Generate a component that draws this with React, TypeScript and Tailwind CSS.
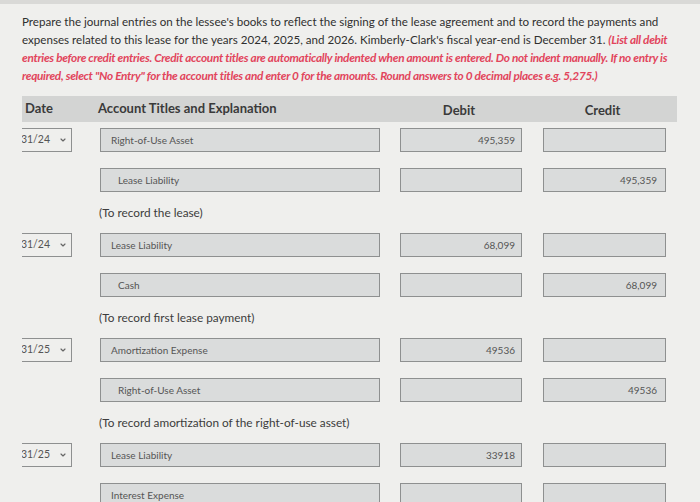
import { ChevronDown } from 'lucide-react';

interface Line {
  account: string;
  indent?: boolean;
  debit?: string;
  credit?: string;
}

interface Entry {
  date: string;
  lines: Line[];
  note?: string;
}

const ENTRIES: Entry[] = [
  {
    date: '12/31/24',
    lines: [
      { account: 'Right-of-Use Asset', debit: '495,359' },
      { account: 'Lease Liability', indent: true, credit: '495,359' },
    ],
    note: '(To record the lease)',
  },
  {
    date: '12/31/24',
    lines: [
      { account: 'Lease Liability', debit: '68,099' },
      { account: 'Cash', indent: true, credit: '68,099' },
    ],
    note: '(To record first lease payment)',
  },
  {
    date: '12/31/25',
    lines: [
      { account: 'Amortization Expense', debit: '49536' },
      { account: 'Right-of-Use Asset', indent: true, credit: '49536' },
    ],
    note: '(To record amortization of the right-of-use asset)',
  },
  {
    date: '12/31/25',
    lines: [
      { account: 'Lease Liability', debit: '33918' },
      { account: 'Interest Expense' },
    ],
  },
];

const box = 'h-[24px] bg-[#dadcdc] border border-[#8e9090] flex items-center text-[10px] text-[#555] whitespace-nowrap overflow-hidden';

function Row({ line, date }: { line: Line; date?: string }) {
  return (
    <div className="flex h-[24px]">
      <div className="w-[50px] h-[24px] overflow-hidden shrink-0">
        {date && (
          <div className="h-[24px] flex justify-end items-center border-y border-r border-[#8e9090] pr-[4px] text-[10.5px] text-[#555] whitespace-nowrap">
            <span className="shrink-0">{date}</span>
            <ChevronDown className="shrink-0 ml-[9px] w-[8px] h-[8px] text-[#666]" strokeWidth={3.5} />
          </div>
        )}
      </div>
      <div className={`${box} ml-[28px] w-[280px] ${line.indent ? 'pl-[17px]' : 'pl-[10px]'}`}>{line.account}</div>
      <div className={`${box} ml-[20px] w-[122px] justify-end pr-[6px]`}>{line.debit}</div>
      <div className={`${box} ml-[21px] w-[123px] justify-end pr-[8px]`}>{line.credit}</div>
    </div>
  );
}

export default function App() {
  return (
    <div className="w-[700px] h-[502px] overflow-hidden bg-[#efefed] font-['Lato',sans-serif]">
      <div className="h-[4px] bg-[#d9d9d7]" />
      <p className="pl-[22px] pt-[9px] text-[11.6px] leading-[18px] text-[#2f2f2f] whitespace-nowrap">
        Prepare the journal entries on the lessee's books to reflect the signing of the lease agreement and to record the payments and
        <br />
        expenses related to this lease for the years 2024, 2025, and 2026. Kimberly-Clark's fiscal year-end is December 31.{' '}
        <span className="italic font-bold text-[#e2455c] text-[11.8px] tracking-[-0.3px]">(List all debit</span>
        <br />
        <span className="italic font-bold text-[#e2455c] text-[11.8px] tracking-[-0.3px]">
          entries before credit entries. Credit account titles are automatically indented when amount is entered. Do not indent manually. If no entry is
          <br />
          required, select "No Entry" for the account titles and enter 0 for the amounts. Round answers to 0 decimal places e.g. 5,275.)
        </span>
      </p>

      <div className="ml-[22px] mt-[11px] w-[655px]">
        <div className="h-[26px] bg-[#d3d4d3] flex items-center text-[13px] font-bold text-[#3a3a3a]">
          <div className="w-[50px] pl-[3px]">Date</div>
          <div className="ml-[26px] w-[300px]">Account Titles and Explanation</div>
          <div className="w-[122px] text-center mt-[3px]">Debit</div>
          <div className="ml-[21px] w-[123px] text-center mt-[3px]">Credit</div>
        </div>

        <div className="mt-[6px]">
          {ENTRIES.map((e, i) => (
            <div key={i} className="flex flex-col">
              <Row line={e.lines[0]} date={e.date} />
              <div className="mt-[16px]">
                <Row line={e.lines[1]} />
              </div>
              {e.note && (
                <div className="mt-[11px] mb-[10px] h-[20px] pl-[77px] flex items-center text-[11.8px] text-[#3c3c3c]">{e.note}</div>
              )}
            </div>
          ))}
        </div>
      </div>
    </div>
  );
}
